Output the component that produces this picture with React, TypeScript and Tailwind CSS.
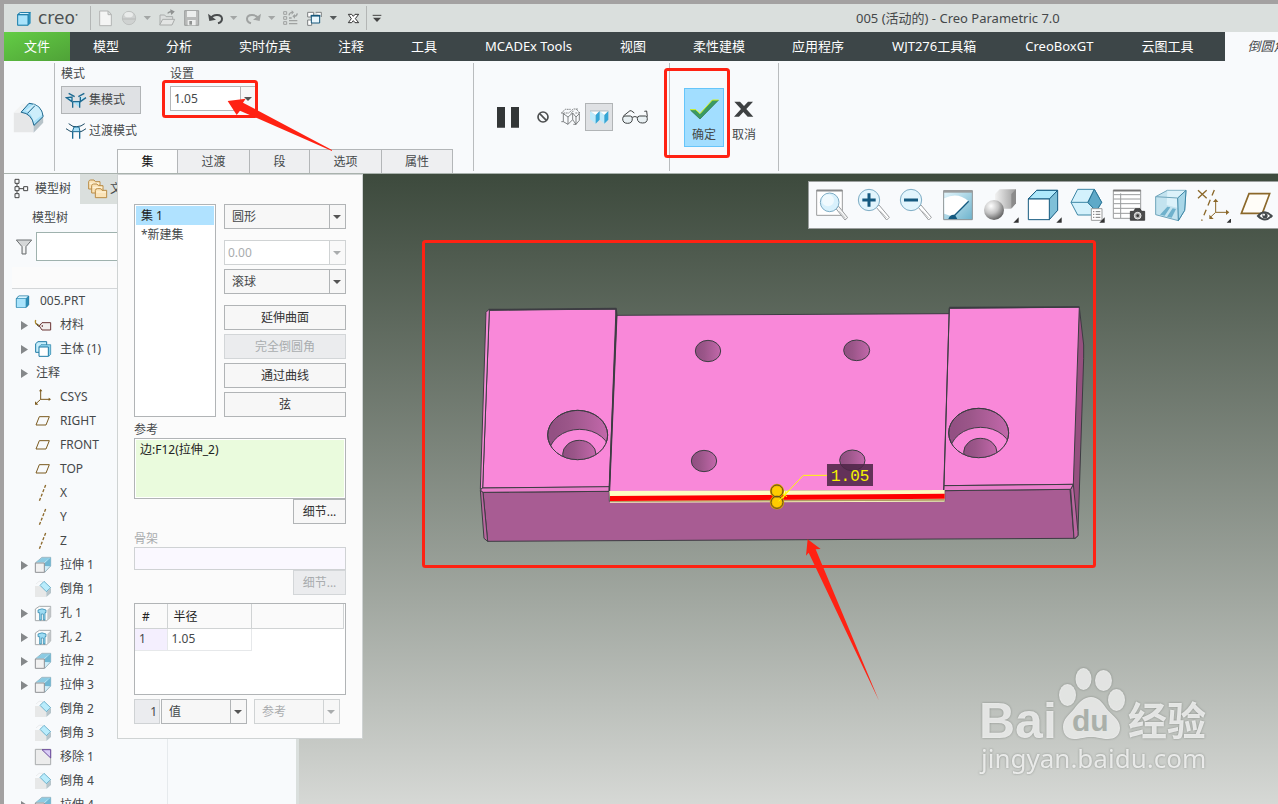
import React from "react";

type IconProps = { box: string; w: number; h: number; children: React.ReactNode };

function Icon({ box, w, h, children }: IconProps) {
  return (
    <svg viewBox={box} width={w} height={h} fill="none" aria-hidden="true" className="block shrink-0">
      {children}
    </svg>
  );
}

function Caret({ muted = false }: { muted?: boolean }) {
  return (
    <svg viewBox="0 0 8 4" width="8" height="4" aria-hidden="true" className="block shrink-0">
      <path d="M0 0h8L4 4z" fill={muted ? "#a9acad" : "#555"} />
    </svg>
  );
}

function Divider() {
  return <div className="my-[2px] w-px shrink-0 bg-[#b9bcbe]" />;
}

/* ---------- title bar ---------- */

const quickTools: { name: string; x: number; w: number; art: React.ReactNode }[] = [
  {
    name: "新建", x: 288, w: 18,
    art: <path d="M299 33h26l9 10v34h-35zM324 33v11h10" fill="#f4f5f4" stroke="#b3b5b4" strokeWidth="3" />,
  },
  {
    name: "外观", x: 357, w: 18,
    art: (
      <>
        <circle cx="387" cy="54" r="20" fill="#cfd2d1" stroke="#b4b6b5" strokeWidth="2" />
        <ellipse cx="386" cy="44" rx="13" ry="8" fill="#e9ebea" />
        <path d="M367 57h40" stroke="#b9bbba" strokeWidth="3" />
      </>
    ),
  },
  { name: "外观选项", x: 426, w: 10, art: <path d="M431 48h22l-11 12z" fill="#a3a6a5" /> },
  {
    name: "打开", x: 471, w: 20,
    art: (
      <>
        <path d="M480 74V45h14l4 5h20v8" fill="#dcdfde" stroke="#a9acab" strokeWidth="3" />
        <path d="M479 75l9-17h36l-8 17z" fill="#e3e5e4" stroke="#a9acab" strokeWidth="3" />
        <path d="M503 40q5-6 12-5M513 31l8 4-6 6z" stroke="#8f9291" strokeWidth="4" fill="#8f9291" />
      </>
    ),
  },
  {
    name: "保存", x: 546, w: 20,
    art: (
      <>
        <path d="M554 32h42v44h-42z" fill="#b9bbba" stroke="#9c9f9e" strokeWidth="3" />
        <path d="M561 33h27v18h-27zM563 60h24v16h-24z" fill="#eceeed" />
        <path d="M568 63h8v11h-8z" fill="#8f9291" />
      </>
    ),
  },
  {
    name: "撤消", x: 621, w: 18,
    art: (
      <>
        <path d="M632 55c8-14 33-13 34 1 0 8-5 12-12 14" stroke="#4a4d4e" strokeWidth="6" />
        <path d="M624 41l4 22 20-4z" fill="#4a4d4e" />
      </>
    ),
  },
  { name: "撤消列表", x: 690, w: 10, art: <path d="M690 48h22l-11 12z" fill="#a3a6a5" /> },
  {
    name: "重做", x: 735, w: 18,
    art: (
      <>
        <path d="M775 55c-8-14-33-13-34 1 0 8 5 12 12 14" stroke="#a0a3a2" strokeWidth="6" />
        <path d="M783 41l-4 22-20-4z" fill="#a0a3a2" />
      </>
    ),
  },
  { name: "重做列表", x: 804, w: 10, art: <path d="M804 48h22l-11 12z" fill="#a3a6a5" /> },
  {
    name: "重新生成", x: 848, w: 17,
    art: (
      <>
        <path d="M850 35h9v8h-9zM850 50h9v8h-9zM850 65h9v8h-9z" stroke="#9fa2a1" strokeWidth="3" />
        <path d="M866 54h8M866 62h25M866 71h25" stroke="#9fa2a1" strokeWidth="4" />
        <path d="M866 46c1-7 5-9 10-9M891 40c-1 7-5 9-10 9" stroke="#9fa2a1" strokeWidth="4" />
        <path d="M874 31l7 6-7 7zM884 42l-8 7 8 7z" fill="#9fa2a1" />
      </>
    ),
  },
  {
    name: "窗口", x: 915, w: 18,
    art: (
      <>
        <path d="M923 37h18v14h-18zM947 37h17v14M923 60h12v16h-12z" fill="#fff" stroke="#7d8182" strokeWidth="3" />
        <path d="M934 47h25v22h-25z" fill="#e9f6fc" stroke="#17587c" strokeWidth="3" />
        <path d="M932 47h29" stroke="#17587c" strokeWidth="5" />
      </>
    ),
  },
  { name: "窗口列表", x: 984, w: 10, art: <path d="M989 48h22l-11 12z" fill="#55595a" /> },
  {
    name: "关闭", x: 1029, w: 18,
    art: (
      <path d="M1045 43h10l5 6 5-6h11l-10 13 10 12h-11l-5-6-5 6h-10l9-12z" fill="#fff" stroke="#333" strokeWidth="3" />
    ),
  },
];

function TitleBar() {
  return (
    <header className="flex h-7 shrink-0 items-center bg-[#dadfdd]">
      <div className="flex h-6 w-[87px] shrink-0 items-center gap-1.5 border-r border-[#b3b6b5] pl-3">
        <Icon box="48 28 48 50" w={16} h={17}>
          <path d="M52 41l8-7h32v33l-7 7H52z" fill="#2f93bd" />
          <path d="M53 42h31v31H53z" fill="#a9e3fb" stroke="#2280ab" strokeWidth="3" />
          <path d="M53 41l8-6h30l-7 6z" fill="#d5f2fd" stroke="#2280ab" strokeWidth="3" />
        </Icon>
        <span className="font-['DejaVu_Sans'] text-[17px] leading-5 text-[#4c5152]">
          creo<span className="align-super text-[6px] leading-none">•</span>
        </span>
      </div>
      <div className="flex shrink-0 items-center gap-[5px] pl-[5px]">
        {quickTools.map((t) => (
          <button key={t.name} type="button" aria-label={t.name} className="block">
            <Icon box={`${t.x} 24 ${t.w * 3} 60`} w={t.w} h={20}>{t.art}</Icon>
          </button>
        ))}
        <div className="h-6 w-px bg-[#b3b6b5]" />
        <button type="button" aria-label="自定义快速访问工具栏" className="block">
          <Icon box="1116 24 30 60" w={10} h={20}>
            <path d="M1118 46h26" stroke="#444" strokeWidth="3" />
            <path d="M1119 53h24l-12 13z" fill="#444" />
          </Icon>
        </button>
      </div>
      <h1 className="ml-[474px] whitespace-nowrap text-[13px] leading-5">005 (活动的) - Creo Parametric 7.0</h1>
    </header>
  );
}

/* ---------- ribbon ---------- */

const menus: { name: string; latin?: boolean }[] = [
  { name: "模型" },
  { name: "分析" },
  { name: "实时仿真" },
  { name: "注释" },
  { name: "工具" },
  { name: "MCADEx Tools", latin: true },
  { name: "视图" },
  { name: "柔性建模" },
  { name: "应用程序" },
  { name: "WJT276工具箱", latin: true },
  { name: "CreoBoxGT", latin: true },
  { name: "云图工具" },
];

function MenuBar() {
  return (
    <nav className="flex h-[29px] shrink-0 items-stretch overflow-hidden bg-[#f8fafc] text-[13px]">
      <button type="button" className="w-[66px] shrink-0 bg-linear-to-br from-[#63cd45] to-[#4fa237] text-white">文件</button>
      <div className="flex shrink-0 gap-[47px] bg-[#3d4648] pr-8 pl-[23px] text-white">
        {menus.map((m) => (
          <button key={m.name} type="button" className={m.latin ? "px-px whitespace-nowrap" : "whitespace-nowrap"}>{m.name}</button>
        ))}
      </div>
      <button type="button" className="shrink-0 pl-[22px] whitespace-nowrap italic">倒圆角</button>
    </nav>
  );
}

function Ribbon() {
  return (
    <section className="flex shrink-0 border-b border-[#a9b2ad] bg-[#f8fafc]">
      <div className="flex w-[50px] shrink-0 items-center justify-center">
        <Icon box="40 300 96 100" w={32} h={33}>
          <path d="M42 335h24q30 6 36 36v24H42z" fill="#e6e7e8" />
          <path d="M42 335l26-27h24L66 335z" fill="#f3f4f4" />
          <path d="M102 371l29-29v24l-29 30z" fill="#b7c3c9" />
          <path d="M64 334l24-27q38 2 43 40l-28 27q-6-36-39-40z" fill="#a9e1f9" stroke="#155f86" strokeWidth="3" />
          <path d="M78 329l24-19q22 9 26 32l-26 20q-6-25-24-33z" fill="#cdeefb" />
          <path d="M83 338l23-24" stroke="#155f86" strokeWidth="3" />
        </Icon>
      </div>
      <Divider />
      <div className="flex w-[418px] shrink-0 flex-col pt-[5px]">
        <div className="flex pl-1.5">
          <div className="w-[109px]">
            <p className="h-4 leading-4">模式</p>
            <button type="button" className="mt-1 flex h-7 w-20 items-center gap-0.5 border border-[#b1b4b6] bg-[#dfe1e4] pl-[3px]">
              <Icon box="192 270 66 60" w={22} h={20}>
                <path d="M203 280l18 10M196 293l17 12v-14zM250 280l-18 10M255 293l-17 12v-14" fill="#bfeafb" stroke="#1d6a91" strokeWidth="4" />
                <path d="M215 305h21v18M215 305v18" fill="#a9e1f9" stroke="#1d6a91" strokeWidth="4" />
              </Icon>
              集模式
            </button>
            <button type="button" className="mt-[3px] flex h-7 w-20 items-center gap-0.5 pl-1 whitespace-nowrap">
              <Icon box="192 363 66 60" w={22} h={20}>
                <path d="M203 371q14 12 24 9 14 0 24-9M195 386q14 10 20 10M255 386q-14 10-20 10" stroke="#1d4c66" strokeWidth="3" />
                <path d="M219 381h15l3 14h-23z" fill="#a9e1f9" stroke="#1d6a91" strokeWidth="3" />
                <path d="M215 396v20M236 396v20" stroke="#1d6a91" strokeWidth="4" />
              </Icon>
              过渡模式
            </button>
          </div>
          <div>
            <label htmlFor="radius" className="block h-4 leading-4">设置</label>
            <div className="mt-1 flex h-[25px] w-[87px] border border-[#b4b7b9]">
              <input id="radius" defaultValue="1.05" className="w-0 flex-1 bg-white px-[3px] outline-none" />
              <button type="button" aria-label="半径列表" className="flex w-4 items-center justify-center border-l border-[#b4b7b9] bg-[#f7f8f8] pr-px">
                <Caret />
              </button>
            </div>
          </div>
        </div>
        <div role="tablist" className="mt-1 ml-[62px] flex h-6">
          {[["集", "w-[60px] bg-[#fbfcfc] text-[#111]"], ["过渡", "w-[72px] bg-[#eeeff1]"], ["段", "w-[60px] bg-[#eeeff1]"], ["选项", "w-[72px] bg-[#eeeff1]"], ["属性", "w-[72px] border-r bg-[#eeeff1]"]].map(([t, c]) => (
            <button key={t} role="tab" type="button" className={`border-t border-l border-[#b3b6b8] ${c}`}>{t}</button>
          ))}
        </div>
      </div>
      <Divider />
      <div className="flex w-[195px] shrink-0 items-center pl-[22px]">
        <button type="button" aria-label="暂停" className="mr-[9px]">
          <Icon box="288 312 72 72" w={24} h={24}>
            <path d="M291 318h24v62h-24zM333 318h24v62h-24z" fill="#333637" />
          </Icon>
        </button>
        <button type="button" aria-label="无预览" className="flex w-7 justify-center">
          <Icon box="408 329 42 42" w={14} h={14}>
            <circle cx="429" cy="350" r="15" stroke="#4d4f50" strokeWidth="5" />
            <path d="M419 340l20 20" stroke="#4d4f50" strokeWidth="5" />
          </Icon>
        </button>
        <button type="button" aria-label="线框预览" className="flex w-7 justify-center">
          <Icon box="480 322 66 60" w={22} h={20}>
            <g stroke="#6a6e70" strokeWidth="2.500">
              <path d="M484 340l12-11h16M484 340h22l14-12h14M512 342l10-10M526 340h14l-12-12" strokeDasharray="5 2" />
              <path d="M490 340v26h-6M490 366l14 8v-22l-14-10M504 352l14-12v20l-14 14M518 360l10 14h-8M528 374v-22l-10-12M528 352l10-10v20l-10 12" />
            </g>
          </Icon>
        </button>
        <button type="button" aria-label="着色预览" className="flex h-7 w-7 items-center justify-center border border-[#b1b4b6] bg-[#dfe1e4]">
          <Icon box="566 322 60 60" w={20} h={20}>
            <path d="M569 334h28l-11 12zM597 334h27l-12 12z" fill="#fff" />
            <path d="M569 334l17 12v26l-17-14zM598 334l14 12v26l-14-12z" fill="#bdeafb" />
            <path d="M586 346l12-12v26l-12 12zM612 346l12-12v26l-12 12z" fill="#35a6d6" />
            <path d="M569 334h55" stroke="#93a4ac" strokeWidth="2" />
          </Icon>
        </button>
        <button type="button" aria-label="预览" className="flex w-11 justify-center">
          <Icon box="663 330 84 54" w={28} h={18}>
            <path d="M668 362q0-8 7-8h16q6 0 6 8 0 14-14 14-15 0-15-14zM712 362q0-8 7-8h17q6 0 6 8 0 13-14 13-15 0-16-13z" fill="#e9f0f3" stroke="#3f4243" strokeWidth="3" />
            <path d="M697 358q8-5 15 0M670 354l20-16 5 1 8 6M742 356l-2-17-7 1" stroke="#3f4243" strokeWidth="3" />
          </Icon>
        </button>
      </div>
      <Divider />
      <div className="flex w-[108px] shrink-0 items-center pl-3.5">
        <button type="button" className="flex h-[59px] w-10 flex-col items-center gap-[7px] border border-[#66c5fa] bg-[#a2deff] pt-[9px]">
          <Icon box="867 292 93 66" w={31} h={22}>
            <path d="M870 327h17l13 12 37-41h19l-56 57z" fill="#3a9a63" />
            <path d="M870 327h17l13 12 37-41h19" stroke="#d5f21a" strokeWidth="3" />
            <path d="M872 329l28 26 55-56" stroke="#2d6e3f" strokeWidth="2" />
          </Icon>
          <span className="leading-4">确定</span>
        </button>
        <button type="button" className="flex h-[59px] w-10 flex-col items-center gap-1.5 pt-[11px]">
          <Icon box="998 298 66 66" w={22} h={22}>
            <path d="M1002 306h17l12 13 12-13h15l-20 22 21 23h-17l-13-14-13 14h-15l21-23z" fill="#3e4142" />
          </Icon>
          <span className="leading-4">取消</span>
        </button>
      </div>
      <Divider />
    </section>
  );
}

/* ---------- model tree ---------- */

const art = {
  material: (
    <Icon box="102 438 54 54" w={18} h={18}>
      <path d="M107 450q-3 12 5 14l8 3" stroke="#b08d2a" strokeWidth="4" />
      <path d="M110 460l4 8 8 2" stroke="#4a3a2a" strokeWidth="3" />
      <path d="M118 468l8-10h26v22h-26z" fill="#f2efee" stroke="#6b3535" strokeWidth="3" />
      <path d="M125 468h4" stroke="#6b3535" strokeWidth="4" />
    </Icon>
  ),
  body: (
    <Icon box="102 510 54 54" w={18} h={18}>
      <path d="M107 521l7-6h26v26l-6 6h-27z" fill="#c8effc" stroke="#1f7ba5" strokeWidth="3" />
      <path d="M117 530l6-6h29v29l-6 6z" fill="#8fd3ec" stroke="#1f7ba5" strokeWidth="2" />
      <path d="M117 531h28v28h-28z" fill="#fff" stroke="#1f7ba5" strokeWidth="3" />
    </Icon>
  ),
  csys: (
    <Icon box="102 654 54 54" w={18} h={18}>
      <path d="M122 660v28h28M122 688l-14 13" stroke="#7b5a1e" strokeWidth="3" />
      <path d="M117 664l5-7 5 7zM146 683l7 5-7 5zM105 694v10h10z" fill="#7b5a1e" />
    </Icon>
  ),
  plane: (
    <Icon box="102 726 54 54" w={18} h={18}>
      <path d="M118 740h30l-10 25h-30z" stroke="#7b5a1e" strokeWidth="3" />
    </Icon>
  ),
  axis: (
    <Icon box="102 252 54 54" w={18} h={18}>
      <path d="M137 255l-19 48" stroke="#8b682a" strokeWidth="4" strokeDasharray="9 5" />
    </Icon>
  ),
  extrude: (
    <Icon box="102 468 54 54" w={18} h={18}>
      <path d="M106 489l20-17h26v26l-18 19z" fill="#cfeefa" stroke="#9fb3bc" strokeWidth="3" />
      <path d="M134 489l18-17v27l-18-1z" fill="#6fb7d3" />
      <path d="M108 487l18-14h24l-17 14z" fill="#8ccbe3" />
      <path d="M106 489h27v28h-27z" fill="#f1f1f1" stroke="#8e9194" strokeWidth="3" />
    </Icon>
  ),
  chamfer: (
    <Icon box="102 540 54 54" w={18} h={18}>
      <path d="M105 558h19l14 16v17h-33z" fill="#e7e8e8" />
      <path d="M108 552l9-8h12" stroke="#e2e4e5" strokeWidth="2" />
      <path d="M139 576l14-12v15l-14 12z" fill="#b6c4ca" />
      <path d="M132 544l20 19-13 12-19-19z" fill="#b9ecfc" stroke="#3f93b3" strokeWidth="2" />
    </Icon>
  ),
  hole: (
    <Icon box="102 42 54 54" w={18} h={18}>
      <path d="M106 57l12-8h34v32l-12 11h-34z" fill="#fafbfb" stroke="#a5a9ab" strokeWidth="3" />
      <path d="M142 60l10-10v31l-10 10z" fill="#c3c8ca" />
      <path d="M114 60q12-7 24 0M114 60v8h5v22h5V72h6v18h5V68h3v-8" fill="#9edcf3" stroke="#1f7ba5" strokeWidth="2" />
    </Icon>
  ),
  remove: (
    <Icon box="102 474 54 54" w={18} h={18}>
      <path d="M106 478h46v46h-46z" fill="#ececec" stroke="#a9acae" strokeWidth="3" />
      <path d="M126 479h26v25z" fill="#d9cdf6" stroke="#6b4a9c" strokeWidth="3" />
    </Icon>
  ),
};

const nodes: { label: string; icon?: keyof typeof art; open?: boolean }[] = [
  { label: "材料", icon: "material", open: true },
  { label: "主体 (1)", icon: "body", open: true },
  { label: "注释", open: true },
  { label: "CSYS", icon: "csys" },
  { label: "RIGHT", icon: "plane" },
  { label: "FRONT", icon: "plane" },
  { label: "TOP", icon: "plane" },
  { label: "X", icon: "axis" },
  { label: "Y", icon: "axis" },
  { label: "Z", icon: "axis" },
  { label: "拉伸 1", icon: "extrude", open: true },
  { label: "倒角 1", icon: "chamfer" },
  { label: "孔 1", icon: "hole", open: true },
  { label: "孔 2", icon: "hole", open: true },
  { label: "拉伸 2", icon: "extrude", open: true },
  { label: "拉伸 3", icon: "extrude", open: true },
  { label: "倒角 2", icon: "chamfer" },
  { label: "倒角 3", icon: "chamfer" },
  { label: "移除 1", icon: "remove" },
  { label: "倒角 4", icon: "chamfer" },
  { label: "拉伸 4", icon: "extrude", open: true },
];

function ModelTree() {
  return (
    <aside className="flex w-[295px] shrink-0 flex-col overflow-hidden border-r-[3px] border-[#dadfdd] bg-[#f8fafc]">
      <div className="flex h-[30px] shrink-0">
        <button type="button" className="flex w-[76px] items-center gap-[5px] pl-2 whitespace-nowrap">
          <Icon box="24 12 54 66" w={18} h={22}>
            <path d="M33 16h12v12H33zM33 38h12v12H33zM59 38h12v12H59zM33 59h12v12H33zM39 28v10M39 50v9M45 44h14" stroke="#444" strokeWidth="3" />
          </Icon>
          模型树
        </button>
        <button type="button" className="flex flex-1 items-center gap-0.5 bg-[#dadfdd] pl-[7px] whitespace-nowrap">
          <Icon box="248 12 63 66" w={21} h={22}>
            {[[0, 0], [9, 12], [20, 26]].map(([dx, dy]) => (
              <g key={dx} transform={`translate(${dx} ${dy})`}>
                <path d="M253 23q1-5 6-5h10l4 5h14v22h-34z" fill="#fae3b8" stroke="#b98b45" strokeWidth="3" />
                <path d="M256 28h29" stroke="#fff5dd" strokeWidth="3" />
              </g>
            ))}
          </Icon>
          文件夹浏览器
        </button>
      </div>
      <h2 className="h-7 shrink-0 pl-7 leading-7">模型树</h2>
      <div className="flex h-[29px] shrink-0 items-center gap-1 pl-3">
        <Icon box="36 192 48 48" w={16} h={16}>
          <path d="M37 195h46L66 215v22H54v-22z" fill="#d5d7d8" stroke="#6d7072" strokeWidth="3" />
          <path d="M60 213v21" stroke="#fff" strokeWidth="4" />
        </Icon>
        <input aria-label="过滤" className="h-full w-0 flex-1 border border-[#9fb2ae] bg-white px-1 outline-none" />
      </div>
      <div className="mt-1.5 ml-2 h-[22px] shrink-0 border-b border-[#d3d6d8] bg-[#fbfbfb]" />
      <div className="min-h-0 w-[164px] flex-1 overflow-hidden border-r border-[#e6eaed]">
        <div className="flex h-6 items-center gap-2.5 pl-[11px]">
          <Icon box="45 370 45 45" w={15} h={15}>
            <path d="M49 384l7-8h30v26l-7 8H49z" fill="#2c8db6" stroke="#1f7ba5" strokeWidth="3" />
            <path d="M50 385h27v25H50z" fill="#a9e3fb" />
            <path d="M51 383l6-6h27l-6 6z" fill="#d8f3fd" />
          </Icon>
          005.PRT
        </div>
        <ul>
          {nodes.map((n) => (
            <li key={n.label} className="flex h-6 items-center pl-4 whitespace-nowrap">
              <span className="flex w-3.5 shrink-0">
                {n.open && (
                  <svg viewBox="0 0 12 9" width="12" height="9" aria-hidden="true">
                    <path d="M1 0l7 4.500L1 9z" fill="#85888a" />
                  </svg>
                )}
              </span>
              {n.icon && <span className="mr-2">{art[n.icon]}</span>}
              <span className={n.icon ? "" : "pl-0.5"}>{n.label}</span>
            </li>
          ))}
        </ul>
      </div>
    </aside>
  );
}

/* ---------- round feature panel ---------- */

function Select({ label, value, disabled = false, className }: { label: string; value: string; disabled?: boolean; className: string }) {
  return (
    <div className={`relative flex h-[25px] border bg-[#f7f7f7] ${disabled ? "border-[#d0d3d4] text-[#a9acae]" : "border-[#b1b4b6]"} ${className}`}>
      <select aria-label={label} disabled={disabled} className="w-full appearance-none bg-transparent pl-[7px] outline-none">
        <option>{value}</option>
      </select>
      <span className={`pointer-events-none absolute inset-y-0 right-0 flex w-4 items-center justify-center border-l pr-px ${disabled ? "border-[#d0d3d4]" : "border-[#b1b4b6]"}`}>
        <Caret muted={disabled} />
      </span>
    </div>
  );
}

function PushButton({ children, disabled = false, className = "" }: { children: React.ReactNode; disabled?: boolean; className?: string }) {
  return (
    <button
      type="button"
      disabled={disabled}
      className={`block h-[25px] border ${disabled ? "border-[#d3d6d8] bg-[#ebecee] text-[#a9acae]" : "border-[#b1b4b6] bg-[#f7f7f7] text-[#333]"} ${className}`}
    >
      {children}
    </button>
  );
}

function SetsPanel() {
  return (
    <div role="tabpanel" className="absolute top-0 left-[113px] w-[246px] border border-[#cfd3d3] bg-[#fbfbfb] px-4 pt-[29px] pb-3.5">
      <div className="flex gap-2">
        <ul className="w-[82px] border border-[#b1b4b6] bg-white p-px">
          <li className="h-[19px] bg-[#b0e2ff] pl-[5px] leading-[19px] text-[#222]">集 1</li>
          <li className="h-[19px] pl-[5px] leading-[19px]">*新建集</li>
        </ul>
        <div className="flex w-[122px] flex-col">
          <Select label="截面形状" value="圆形" className="" />
          <div className="mt-[11px] flex h-[25px] border border-[#d0d3d4] text-[#a9acae]">
            <input aria-label="圆锥参数" disabled defaultValue="0.00" className="w-0 flex-1 bg-white pl-[3px]" />
            <button type="button" disabled aria-label="圆锥参数列表" className="flex w-4 items-center justify-center border-l border-[#d0d3d4] bg-[#f9f9f9] pr-px">
              <Caret muted />
            </button>
          </div>
          <Select label="创建方法" value="滚球" className="mt-1" />
          <div className="mt-[11px] flex flex-col gap-1">
            <PushButton>延伸曲面</PushButton>
            <PushButton disabled>完全倒圆角</PushButton>
            <PushButton>通过曲线</PushButton>
            <PushButton>弦</PushButton>
          </div>
        </div>
      </div>
      <h3 className="mt-1 h-[17px] leading-[18px]">参考</h3>
      <div className="h-[61px] border border-[#b1b4b6] bg-white p-px">
        <div className="h-full bg-[#eafbdd] px-1 leading-5 text-[#222]">边:F12(拉伸_2)</div>
      </div>
      <PushButton className="ml-auto w-[53px]">细节...</PushButton>
      <h3 className="mt-1.5 h-[17px] leading-[18px] text-[#a9acae]">骨架</h3>
      <div className="h-[23px] border border-[#cfd2d4] bg-[#faf8ff]" />
      <PushButton disabled className="ml-auto w-[53px]">细节...</PushButton>
      <div className="mt-2 h-[92px] border border-[#b1b4b6] bg-white pr-px">
        <table className="w-full table-fixed border-collapse text-left">
          <thead>
            <tr className="h-6 bg-[#fafafa] text-[#222]">
              <th className="w-8 border-r border-b border-[#d0d3d4] pt-0.5 pl-[7px] font-normal">#</th>
              <th className="w-[84px] border-r border-b border-[#d0d3d4] pt-0.5 pl-1.5 font-normal">半径</th>
              <th className="border-r border-b border-[#d0d3d4]" />
            </tr>
          </thead>
          <tbody>
            <tr className="h-[22px]">
              <td className="border-r border-b border-[#e6e8ea] bg-[#f4effe] pl-1">1</td>
              <td className="border-r border-b border-[#e6e8ea] pl-1">1.05</td>
              <td />
            </tr>
          </tbody>
        </table>
      </div>
      <div className="mt-1 flex">
        <span className="w-[26px] border border-[#cfd2d4] bg-[#ebecef] pr-0.5 text-right leading-[23px]">1</span>
        <Select label="值类型" value="值" className="ml-px w-[86px]" />
        <Select label="参考类型" value="参考" disabled className="ml-[7px] w-[86px]" />
      </div>
    </div>
  );
}

/* ---------- graphics area ---------- */

const viewTools: { name: string; art: React.ReactNode }[] = [
  {
    name: "重新调整",
    art: (
      <>
        <path d="M50 60h77v76H50z" fill="#fff" stroke="#9a9c9d" strokeWidth="3" />
        <path d="M50 62h77" stroke="#888a8b" strokeWidth="5" />
        <path d="M108 116l8-7 27 34-8 7z" fill="#f4f5f5" stroke="#9a9c9e" strokeWidth="3" />
        <path d="M118 124l18 21" stroke="#c3c5c6" strokeWidth="3" />
        <circle cx="89" cy="97" r="28" fill="#d8f1fc" stroke="#7dacc4" strokeWidth="3" />
        <circle cx="84" cy="91" r="18" fill="#f0fafe" />
      </>
    ),
  },
  {
    name: "放大",
    art: (
      <>
        <path d="M229 112l8-7 31 37-8 8z" fill="#fff" stroke="#9a9c9e" strokeWidth="3" />
        <path d="M240 122l20 22" stroke="#c3c5c6" strokeWidth="3" />
        <circle cx="207" cy="90" r="32" fill="#e2f5fd" stroke="#7dacc4" strokeWidth="3" />
        <path d="M207 70v40M187 90h40" stroke="#14597f" strokeWidth="9" />
      </>
    ),
  },
  {
    name: "缩小",
    art: (
      <>
        <path d="M355 112l8-7 31 37-8 8z" fill="#fff" stroke="#9a9c9e" strokeWidth="3" />
        <path d="M366 122l20 22" stroke="#c3c5c6" strokeWidth="3" />
        <circle cx="333" cy="90" r="32" fill="#e2f5fd" stroke="#7dacc4" strokeWidth="3" />
        <path d="M312 90h42" stroke="#14597f" strokeWidth="9" />
      </>
    ),
  },
  {
    name: "重画",
    art: (
      <>
        <path d="M431 62h86v87h-86z" fill="url(#repaint)" stroke="#8d9294" strokeWidth="3" />
        <path d="M433 85q40-20 73 9l-47 46-26-9z" fill="#fff" />
        <path d="M431 64h86" stroke="#9a9c9d" strokeWidth="8" />
        <path d="M506 94l-44 44" stroke="#14597f" strokeWidth="4" />
        <path d="M445 147q6-15 20-12l7 12z" fill="#14597f" />
      </>
    ),
  },
  {
    name: "渲染选项",
    art: (
      <>
        <path d="M585 72l14-14h49v42l-16 16h-47z" fill="url(#grey)" />
        <path d="M634 72l14-14v42l-14 16z" fill="#8b8b8b" />
        <circle cx="582" cy="120" r="30" fill="url(#ball)" />
        <path d="M656 142v16h-16z" fill="#333" />
      </>
    ),
  },
  {
    name: "显示样式",
    art: (
      <>
        <path d="M685 87l25-26h63v60l-25 28z" fill="#7fc0d8" stroke="#14597f" strokeWidth="3" />
        <path d="M685 87l25-26h63l-25 26z" fill="#aee8fb" stroke="#14597f" strokeWidth="3" />
        <path d="M685 87h63v62h-63z" fill="#fff" stroke="#14597f" strokeWidth="3" />
        <path d="M785 142v16h-16z" fill="#333" />
      </>
    ),
  },
  {
    name: "已保存方向",
    art: (
      <>
        <path d="M813 97l20-39h50l22 39-22 38h-50z" fill="#d3f1fc" stroke="#3d86a5" strokeWidth="3" />
        <path d="M813 97h50M883 58l-20 39 20 20" stroke="#3d86a5" strokeWidth="3" />
        <path d="M883 58l22 39-12 19-11 1-18-19z" fill="#5fa9c8" stroke="#2c7697" strokeWidth="3" />
        <path d="M874 116h32v35h-32z" fill="#fff" stroke="#9a9c9d" strokeWidth="3" />
        <path d="M879 125h4M887 125h14M879 133h4M887 133h14M879 142h4M887 142h14" stroke="#777" strokeWidth="3" />
        <path d="M914 142v16h-16z" fill="#333" />
      </>
    ),
  },
  {
    name: "视图管理器",
    art: (
      <>
        <path d="M940 60h82v85h-82z" fill="#fff" stroke="#9a9c9d" strokeWidth="3" />
        <path d="M940 62h82" stroke="#777" strokeWidth="5" />
        <path d="M941 74h80M941 87h80M941 101h80M941 115h80M941 130h80M962 70v74" stroke="#9a9c9d" strokeWidth="3" />
        <path d="M991 124h10l5-8h14l5 8h9v27h-43z" fill="#4a4b4c" stroke="#222" strokeWidth="2" />
        <circle cx="1013" cy="137" r="10" fill="#aaa" stroke="#eee" strokeWidth="3" />
        <circle cx="1013" cy="137" r="4" fill="#333" />
      </>
    ),
  },
  {
    name: "透视图",
    art: (
      <>
        <path d="M1067 80l35-19h56l-4 60-19 31-68-18z" fill="#c3e3ef" stroke="#6fa5bb" strokeWidth="3" />
        <path d="M1102 62h54l-3 57-53-14z" fill="#dcf2fa" />
        <path d="M1133 84l25-23-4 60-19 31z" fill="#a9d7e8" stroke="#3c86a5" strokeWidth="3" />
        <path d="M1067 80l66 4" stroke="#6fa5bb" strokeWidth="3" />
        <path d="M1080 134l22-24 9 2-17 25zM1101 140l17-25 10 2-13 26z" fill="#6fb1cc" />
      </>
    ),
  },
  {
    name: "基准显示过滤器",
    art: (
      <>
        <path d="M1194 61l26 24M1220 61l-26 24" stroke="#8b682a" strokeWidth="4" />
        <path d="M1243 60l-38 92" stroke="#8b682a" strokeWidth="4" strokeDasharray="18 14" />
        <path d="M1247 92v35h34M1247 127l-16 15" stroke="#8b682a" strokeWidth="3" />
        <path d="M1239 96l8-10 8 10zM1278 119l10 8-10 8zM1228 134v13h13z" fill="#8b682a" />
        <path d="M1296 142v16h-16z" fill="#333" />
      </>
    ),
  },
  {
    name: "注释显示",
    art: (
      <>
        <path d="M1347 71h62l-22 59h-63z" fill="#fffdf8" stroke="#8b682a" strokeWidth="5" />
        <path d="M1374 138q20-22 41 0-20 21-41 0z" fill="#fff" stroke="#444a4c" strokeWidth="6" />
        <circle cx="1395" cy="137" r="8" fill="#444a4c" />
        <circle cx="1392" cy="134" r="3" fill="#fff" />
      </>
    ),
  },
];

function ViewToolbar() {
  return (
    <div className="absolute top-[7px] right-0 left-[509px] flex h-12 items-center overflow-hidden border border-r-0 border-[#9b9f9e] bg-[#f8fafc] pl-0.5">
      {viewTools.map((t, i) => (
        <button key={t.name} type="button" aria-label={t.name} className="shrink-0">
          <Icon box={`${33 + 126 * i} 42 126 126`} w={42} h={42}>{t.art}</Icon>
        </button>
      ))}
    </div>
  );
}

const edge = "#3c3c42";

function Counterbore({ id, dx, dy }: { id: string; dx: number; dy: number }) {
  return (
    <g transform={`translate(${dx} ${dy})`} stroke={edge} strokeWidth="3">
      <clipPath id={id}>
        <ellipse cx="473" cy="600" rx="90" ry="74" />
      </clipPath>
      <ellipse cx="473" cy="600" rx="90" ry="74" fill="url(#bore)" />
      <g clipPath={`url(#${id})`}>
        <ellipse cx="479" cy="659" rx="93" ry="76" fill="#f988d9" />
        <ellipse cx="478" cy="658" rx="50" ry="42" fill="url(#bore)" />
      </g>
      <ellipse cx="473" cy="600" rx="90" ry="74" fill="none" />
    </g>
  );
}

function Scene() {
  return (
    <svg viewBox="299 174 979 630" width="979" height="630" className="absolute top-0 left-0 max-w-none" role="img" aria-label="005.PRT">
      <defs>
        <linearGradient id="bore">
          <stop offset="0.100" stopColor="#935083" />
          <stop offset="0.350" stopColor="#9b5689" />
          <stop offset="1" stopColor="#c368ab" />
        </linearGradient>
        <linearGradient id="repaint" x1="0" y1="0" x2="1" y2="1">
          <stop offset="0" stopColor="#e6f7fd" />
          <stop offset="1" stopColor="#6db3cd" />
        </linearGradient>
        <linearGradient id="grey">
          <stop offset="0" stopColor="#f2f2f2" />
          <stop offset="1" stopColor="#9b9b9b" />
        </linearGradient>
        <radialGradient id="ball" cx="0.350" cy="0.300" r="0.750">
          <stop offset="0" stopColor="#fff" />
          <stop offset="0.500" stopColor="#c4c4c4" />
          <stop offset="1" stopColor="#5c5c5c" />
        </radialGradient>
      </defs>
      <g transform="translate(420 235) scale(0.33333)" stroke={edge} strokeWidth="3" strokeLinejoin="round">
        <path d="M1978 217l13 113v40l-17 520v12l-9 8-15-147z" fill="#96507f" />
        <path d="M189 772L568 769v30h1006v-32l376-4 12 147L203 919z" fill="#a85c93" />
        <path d="M181 765l8 7 14 147-11-9z" fill="#b9669f" />
        <path d="M1952 763l8-15 14 142v12l-9 8-3 0z" fill="#b9669f" />
        <path d="M590 241l1000-5-17 531-1005 3z" fill="#f988d9" />
        <path d="M208 226l380-4-20 534-380 3z" fill="#f988d9" />
        <path d="M198 232l8-8 2 2-20 534-7 3z" fill="#f48bd6" />
        <path d="M188 759l380-4v14l-379 3-8-7z" fill="#e97fcb" />
        <path d="M1588 220l390-4-18 532-388 4z" fill="#f988d9" />
        <path d="M1572 752l388-4-8 15-381 4z" fill="#e97fcb" />
        <path d="M206 224l382-3 2 20-22 528M1588 218l390-2" fill="none" strokeWidth="5" />
        <path d="M1588 218l-17 549" fill="none" />
        <g fill="url(#bore)">
          <ellipse cx="864" cy="348" rx="38" ry="32" />
          <ellipse cx="852" cy="678" rx="38" ry="32" />
          <ellipse cx="1310" cy="346" rx="39" ry="31" />
          <ellipse cx="1297" cy="676" rx="38" ry="31" />
        </g>
        <Counterbore id="bore-left" dx={0} dy={0} />
        <Counterbore id="bore-right" dx={1203} dy={-6} />
        <g stroke="none">
          <path d="M568 768l1006-3v35l-1004 3z" fill="#fffcc4" />
          <path d="M570 797l1004-5v5l-1004 4z" fill="#b19a66" />
          <path d="M570 783l1004-7v15l-1004 7z" fill="#f00" />
        </g>
        <path d="M1221 687h138v66h-138z" fill="#4d2547" fillOpacity="0.880" stroke="none" />
        <path d="M1221 721h-71l-72 76M1085 775l16 10M1098 768l-8 22" fill="none" stroke="#ff0" />
        <g fill="#fc0" stroke="#e0a800" strokeWidth="7">
          <circle cx="1071" cy="768" r="18" />
          <circle cx="1071" cy="802" r="18" />
        </g>
        <g fill="none" stroke="#5b4a1c" strokeWidth="3">
          <circle cx="1071" cy="768" r="18" />
          <circle cx="1071" cy="802" r="18" />
        </g>
        <path d="M1108 765l-32 34" stroke="#ff0" />
      </g>
      <text x="831" y="481" fill="#f5f500" fontSize="16" className="font-['Liberation_Mono']">1.05</text>
      <g fill="#fff" fillOpacity="0.760" className="drop-shadow-[0_0_1px_rgba(90,95,90,0.7)]">
        <text x="979" y="738" fontSize="50" fontWeight="700" className="font-['Liberation_Sans']">Bai</text>
        <ellipse cx="1067.500" cy="695" rx="8.500" ry="11" />
        <ellipse cx="1083.500" cy="679" rx="8" ry="11" />
        <ellipse cx="1103.500" cy="680.500" rx="8.500" ry="10.500" />
        <ellipse cx="1116.500" cy="700" rx="8.500" ry="11" />
        <path d="M1091 697c7 0 11 5 15 11 5 7 14 11 14 20 0 8-6 11-12 11-7 0-10-2-17-2s-10 2-17 2c-6 0-11-4-11-12 0-8 6-12 11-18 5-7 10-12 17-12z" />
        <text x="1128" y="735" fontSize="39" fontWeight="700" className="font-['Noto_Sans_CJK_SC']">经验</text>
        <text x="981" y="768" fontSize="26" className="font-['Noto_Sans']">jingyan.baidu.com</text>
      </g>
      <text x="1072" y="731" fill="#aab0aa" fontSize="30" fontWeight="700" className="font-['Liberation_Sans']">du</text>
    </svg>
  );
}

function Callouts() {
  return (
    <svg viewBox="4 4 1274 800" width="1274" height="800" fill="none" aria-hidden="true" className="pointer-events-none absolute top-0 left-0 max-w-none">
      <g stroke="#ff2213" strokeWidth="3">
        <rect x="163.500" y="81.500" width="93" height="35" rx="2" />
        <rect x="665.500" y="69.500" width="63" height="87" rx="2" />
        <rect x="423.500" y="241.500" width="671" height="325" rx="2" />
      </g>
      <g fill="#ff2213" transform="scale(0.33333)">
        <path d="M683 303l54-7-8 12 267 142v3l-276-121-10 13z" />
        <path d="M2423 1618l39 29-15 1 190 454-211-444-8 9z" />
      </g>
    </svg>
  );
}

export default function App() {
  return (
    <div className="relative flex h-screen flex-col overflow-hidden border-t-4 border-l-4 border-[#a3a1a1] bg-[#f8fafc] font-['Noto_Sans','Noto_Sans_CJK_SC',sans-serif] text-[12px] text-[#45484a]">
      <TitleBar />
      <MenuBar />
      <Ribbon />
      <main className="relative flex min-h-0 flex-1">
        <ModelTree />
        <div className="relative flex-1 overflow-hidden bg-linear-to-b from-[#3d4a3d] to-[#d6d8d5]">
          <Scene />
          <ViewToolbar />
        </div>
        <SetsPanel />
      </main>
      <Callouts />
    </div>
  );
}
